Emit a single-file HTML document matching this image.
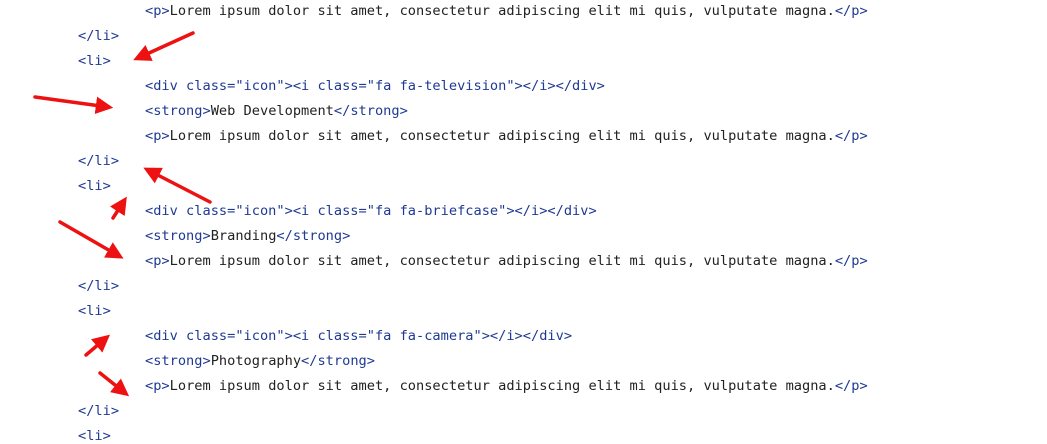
<!DOCTYPE html>
<html><head><style>
body{margin:0;width:1047px;height:431px;overflow:hidden;background:#fff;position:relative}
.l{position:absolute;font-family:"DejaVu Sans Mono","Liberation Mono",monospace;font-size:13.65px;color:#222;white-space:pre;line-height:16px}
.t{color:#1f3a93}
</style></head><body>
<div class="l" style="left:145px;top:3px"><span class="t">&lt;p&gt;</span>Lorem ipsum dolor sit amet, consectetur adipiscing elit mi quis, vulputate magna.<span class="t">&lt;/p&gt;</span></div>
<div class="l t" style="left:78px;top:28px">&lt;/li&gt;</div>
<div class="l t" style="left:78px;top:53px">&lt;li&gt;</div>
<div class="l t" style="left:145px;top:78px">&lt;div class="icon"&gt;&lt;i class="fa fa-television"&gt;&lt;/i&gt;&lt;/div&gt;</div>
<div class="l" style="left:145px;top:103px"><span class="t">&lt;strong&gt;</span>Web Development<span class="t">&lt;/strong&gt;</span></div>
<div class="l" style="left:145px;top:128px"><span class="t">&lt;p&gt;</span>Lorem ipsum dolor sit amet, consectetur adipiscing elit mi quis, vulputate magna.<span class="t">&lt;/p&gt;</span></div>
<div class="l t" style="left:78px;top:153px">&lt;/li&gt;</div>
<div class="l t" style="left:78px;top:178px">&lt;li&gt;</div>
<div class="l t" style="left:145px;top:203px">&lt;div class="icon"&gt;&lt;i class="fa fa-briefcase"&gt;&lt;/i&gt;&lt;/div&gt;</div>
<div class="l" style="left:145px;top:228px"><span class="t">&lt;strong&gt;</span>Branding<span class="t">&lt;/strong&gt;</span></div>
<div class="l" style="left:145px;top:253px"><span class="t">&lt;p&gt;</span>Lorem ipsum dolor sit amet, consectetur adipiscing elit mi quis, vulputate magna.<span class="t">&lt;/p&gt;</span></div>
<div class="l t" style="left:78px;top:278px">&lt;/li&gt;</div>
<div class="l t" style="left:78px;top:303px">&lt;li&gt;</div>
<div class="l t" style="left:145px;top:328px">&lt;div class="icon"&gt;&lt;i class="fa fa-camera"&gt;&lt;/i&gt;&lt;/div&gt;</div>
<div class="l" style="left:145px;top:353px"><span class="t">&lt;strong&gt;</span>Photography<span class="t">&lt;/strong&gt;</span></div>
<div class="l" style="left:145px;top:378px"><span class="t">&lt;p&gt;</span>Lorem ipsum dolor sit amet, consectetur adipiscing elit mi quis, vulputate magna.<span class="t">&lt;/p&gt;</span></div>
<div class="l t" style="left:78px;top:403px">&lt;/li&gt;</div>
<div class="l t" style="left:78px;top:428px">&lt;li&gt;</div>
<svg width="1047" height="431" style="position:absolute;left:0;top:0">
<defs><marker id="a" markerWidth="5" markerHeight="5" refX="3.5" refY="2.5" orient="auto" markerUnits="strokeWidth"><path d="M0,0 L5,2.5 L0,5 Z" fill="#ee1111"/></marker></defs>
<g stroke="#ee1111" stroke-width="3.5" stroke-linecap="round" marker-end="url(#a)">
<line x1="193" y1="33" x2="138" y2="58"/>
<line x1="35" y1="97" x2="108" y2="107"/>
<line x1="210" y1="202" x2="148" y2="170"/>
<line x1="113" y1="218" x2="124" y2="201"/>
<line x1="60" y1="222" x2="119" y2="256"/>
<line x1="86" y1="355" x2="106" y2="338"/>
<line x1="100" y1="373" x2="125" y2="393"/>
</g></svg>
</body></html>
